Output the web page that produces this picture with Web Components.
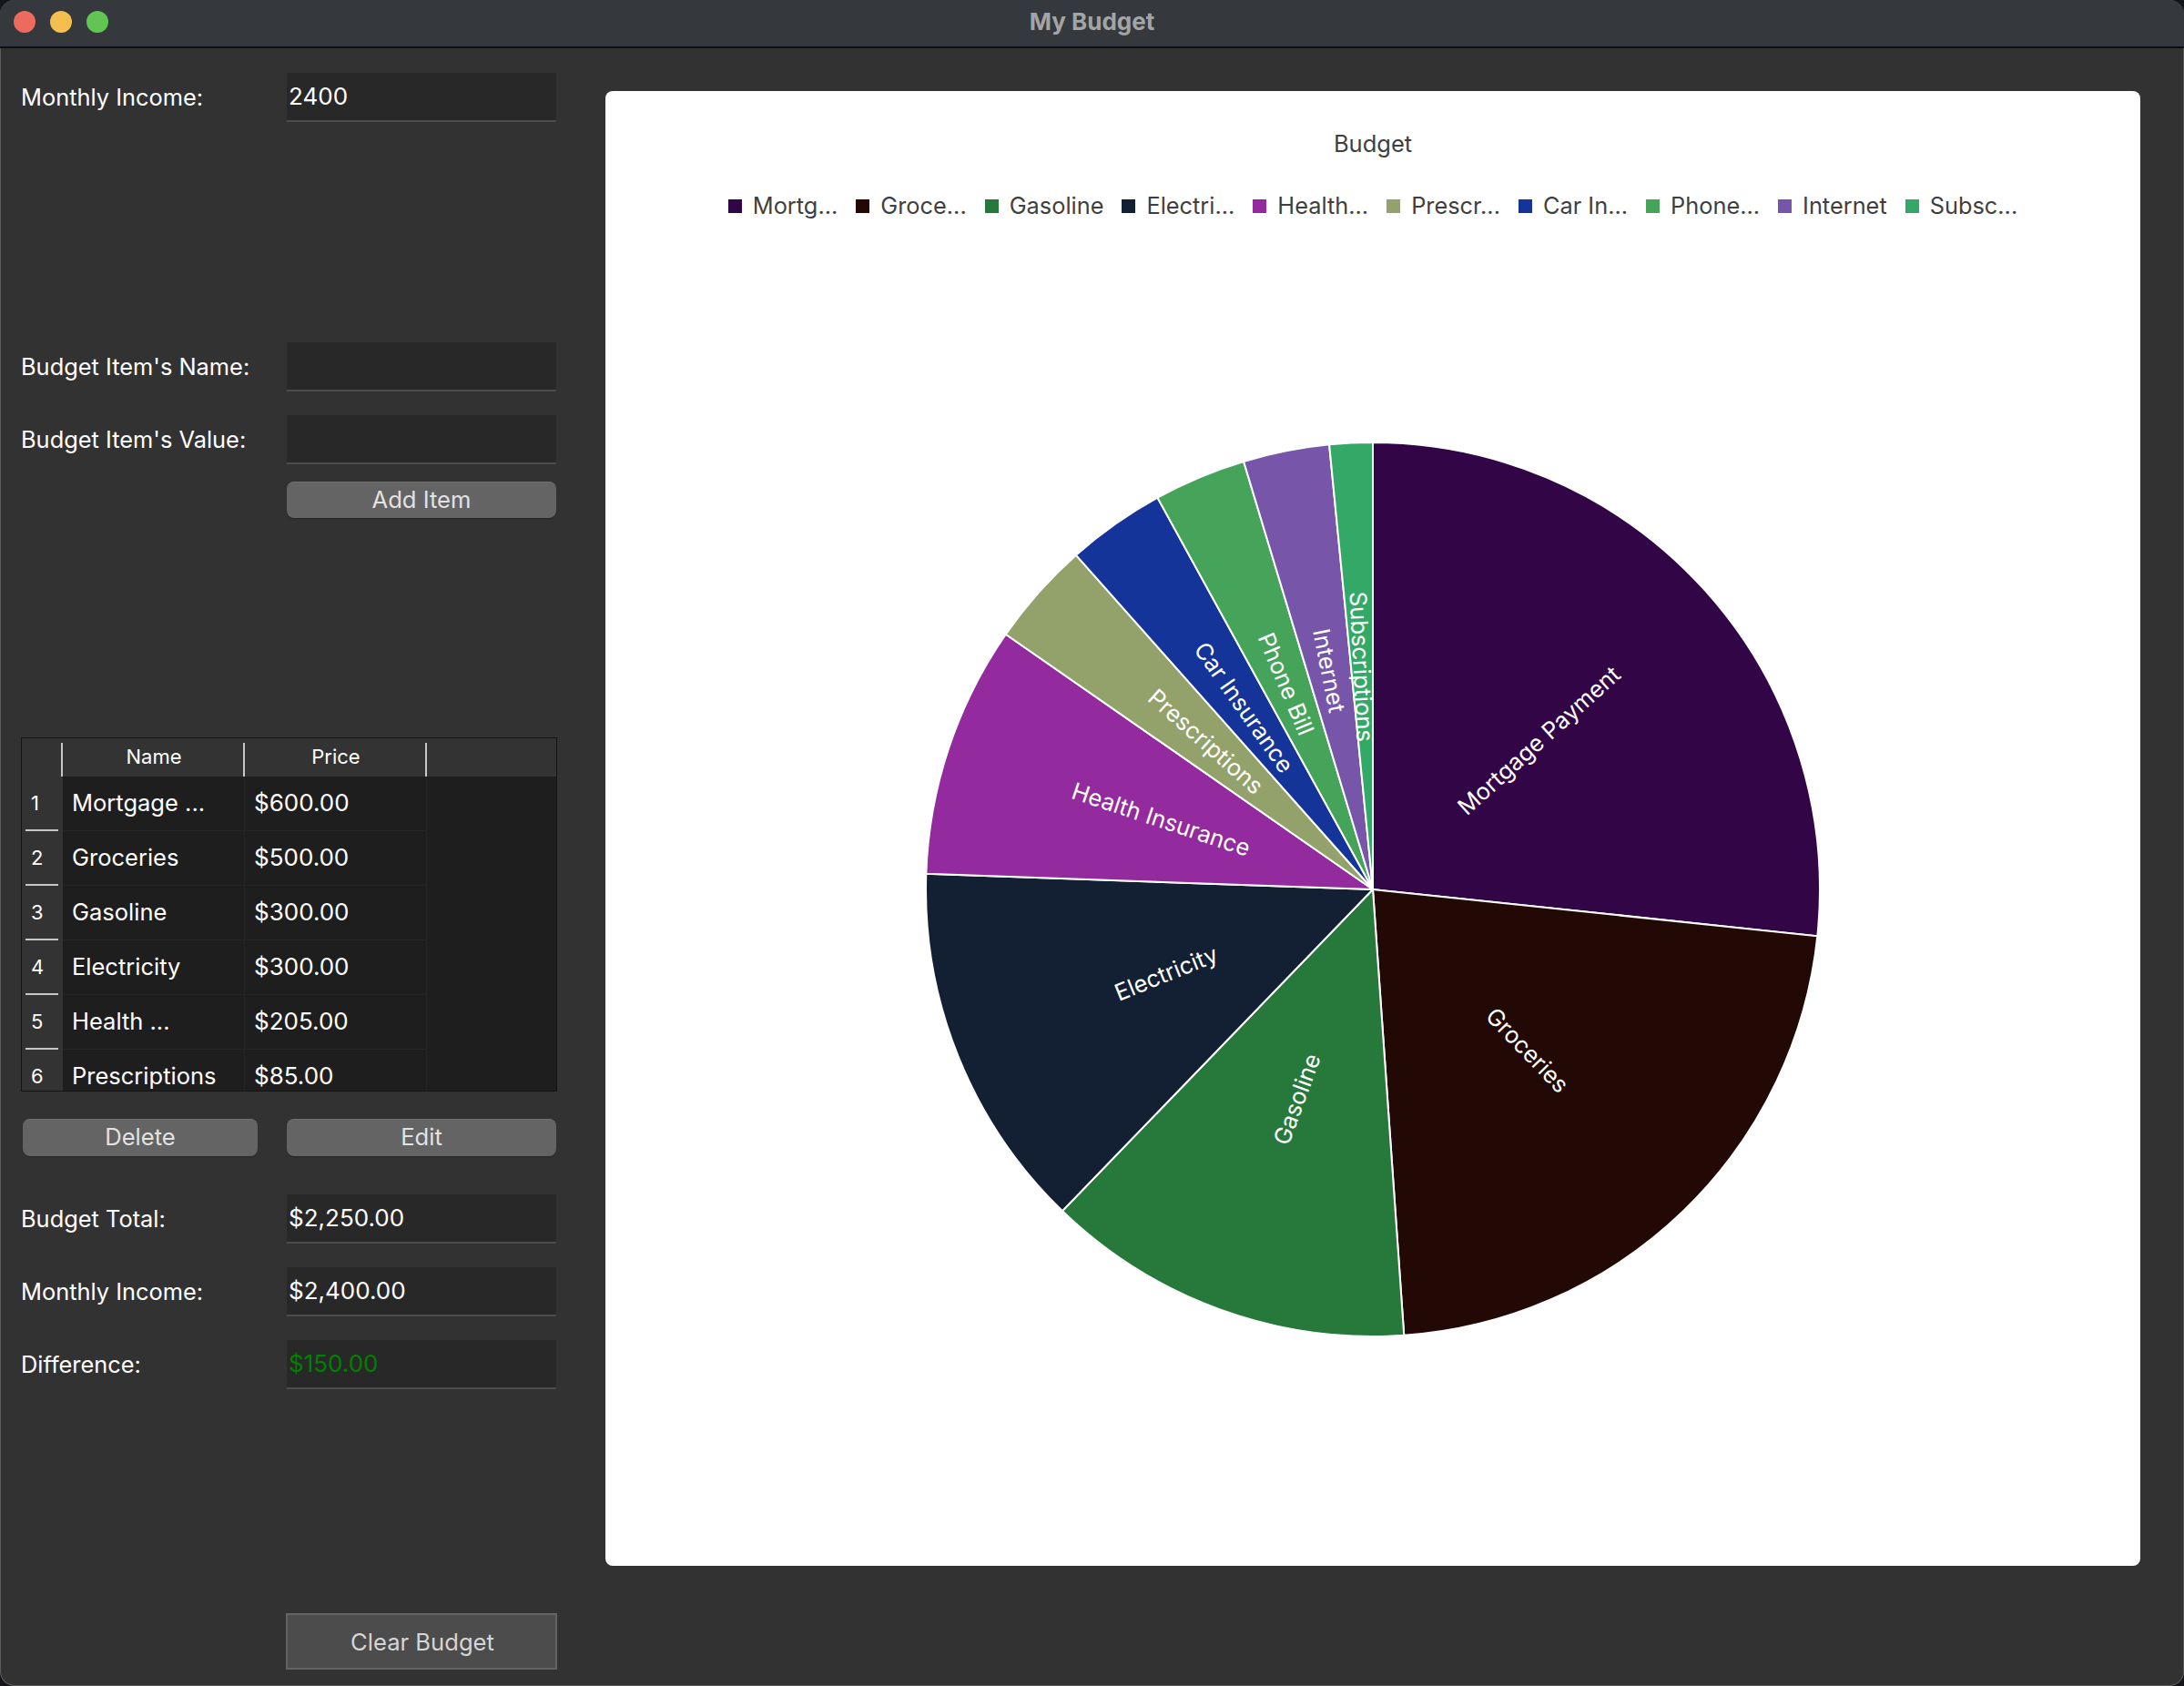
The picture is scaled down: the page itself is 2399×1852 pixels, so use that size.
<!DOCTYPE html>
<html>
<head>
<meta charset="utf-8">
<title>My Budget</title>
<style>
    html, body { margin: 0; padding: 0; background: #15151c; }
    body { width: 2399px; height: 1852px; overflow: hidden; font-family: Inter, "Liberation Sans", sans-serif; }
    .left { display: flex; flex-direction: column; width: 589px; padding-left: 23px; flex: none; }
    .buttons { display: flex; justify-content: space-between; padding-right: 1px; }
</style>
</head>
<body>
<budget-window heading="My Budget">
    <div class="left" slot="left">
        <form-row label="Monthly Income:" value="2400" style="margin-top:26px"></form-row>
        <form-row label="Budget Item's Name:" style="margin-top:241px"></form-row>
        <form-row label="Budget Item's Value:" style="margin-top:25px"></form-row>
        <div class="buttons" style="margin-top:19px;justify-content:flex-end">
            <mac-button style="width:296px">Add Item</mac-button>
        </div>
        <budget-table style="margin-top:241px"></budget-table>
        <div class="buttons" style="margin-top:30px;padding-left:2px">
            <mac-button style="width:258px;height:41px">Delete</mac-button>
            <mac-button style="width:296px;height:41px">Edit</mac-button>
        </div>
        <form-row label="Budget Total:" value="$2,250.00" style="margin-top:41px"></form-row>
        <form-row label="Monthly Income:" value="$2,400.00" style="margin-top:25px"></form-row>
        <form-row label="Difference:" value="$150.00" color="#008000" style="margin-top:25px"></form-row>
        <div class="buttons" style="margin-top:246px;justify-content:flex-end;padding-right:0">
            <mac-button flat style="width:298px;height:62px">Clear Budget</mac-button>
        </div>
    </div>
    <pie-chart slot="right" heading="Budget"></pie-chart>
</budget-window>

<script>
class BudgetWindow extends HTMLElement {
    constructor() {
        super();
        this.attachShadow({ mode: 'open' });
        this.shadowRoot.innerHTML = `
            <style>
                :host {
                    display: flex;
                    flex-direction: column;
                    width: 2399px;
                    height: 1852px;
                    box-sizing: border-box;
                    background: #323232;
                    border-radius: 16px;
                    overflow: hidden;
                    box-shadow: inset 0 0 0 1px #5a5a5a;
                }
                .bar {
                    flex: none;
                    height: 53px;
                    background: #35393d;
                    border-bottom: 2px solid #0e0e0e;
                    box-sizing: border-box;
                    display: flex;
                    align-items: center;
                    justify-content: center;
                    position: relative;
                    color: #a2a4a6;
                    font: 700 26px Inter, "Liberation Sans", sans-serif;
                    padding-bottom: 4px;
                }
                .lights { position: absolute; left: 15px; top: 12px; display: flex; gap: 16px; }
                .lights i { display: block; width: 24px; height: 24px; border-radius: 50%; }
                .main { flex: 1; display: flex; min-height: 0; }
                ::slotted(pie-chart) { margin: 47px 0 0 53px; }
            </style>
            <div class="bar">
                <div class="lights">
                    <i style="background:#ed6a5e"></i>
                    <i style="background:#f5bf4f"></i>
                    <i style="background:#61c554"></i>
                </div>
                <span class="name"></span>
            </div>
            <div class="main">
                <slot name="left"></slot>
                <slot name="right"></slot>
            </div>
        `;
    }

    connectedCallback() {
        this.shadowRoot.querySelector('.name').textContent = this.getAttribute('heading') || '';
    }
}

class FormRow extends HTMLElement {
    constructor() {
        super();
        this.attachShadow({ mode: 'open' });
        this.shadowRoot.innerHTML = `
            <style>
                :host {
                    display: grid;
                    grid-template-columns: 292px 296px;
                    height: 55px;
                    align-items: center;
                    color: #fff;
                    font: 26px Inter, "Liberation Sans", sans-serif;
                }
                .label { font-size: 25.4px; }
                .field {
                    height: 55px;
                    box-sizing: border-box;
                    background: #282828;
                    border-top: 1px solid #333;
                    border-bottom: 2px solid #4c4c4c;
                    padding: 0 2px;
                    line-height: 52px;
                    white-space: nowrap;
                }
            </style>
            <div class="label"></div>
            <div class="field"></div>
        `;
    }

    connectedCallback() {
        this.shadowRoot.querySelector('.label').textContent = this.getAttribute('label');
        const field = this.shadowRoot.querySelector('.field');
        field.textContent = this.getAttribute('value') || '';
        if (this.getAttribute('color')) field.style.color = this.getAttribute('color');
    }
}

class MacButton extends HTMLElement {
    constructor() {
        super();
        this.attachShadow({ mode: 'open' });
        this.shadowRoot.innerHTML = `
            <style>
                :host {
                    display: flex;
                    align-items: center;
                    justify-content: center;
                    height: 40px;
                    box-sizing: border-box;
                    border-radius: 8px;
                    background: #646464;
                    border-top: 1px solid #727272;
                    box-shadow: 0 1px 1px #262626;
                    color: #e2e2e2;
                    font: 25.6px Inter, "Liberation Sans", sans-serif;
                    padding-bottom: 3px;
                }
                :host([flat]) {
                    border-radius: 0;
                    background: #4c4c4c;
                    border: 2px solid #636363;
                    box-shadow: none;
                    color: #d6d6d6;
                    padding-bottom: 0;
                    padding-left: 2px;
                }
            </style>
            <slot></slot>
        `;
    }
}

class BudgetTable extends HTMLElement {
    constructor() {
        super();
        this.attachShadow({ mode: 'open' });
        this.shadowRoot.innerHTML = `
            <style>
                :host {
                    display: block;
                    width: 589px;
                    height: 389px;
                    box-sizing: border-box;
                    overflow: hidden;
                    background: #1e1e1e;
                    border: 1px solid #141414;
                    color: #fff;
                    font: 25.5px Inter, "Liberation Sans", sans-serif;
                }
                .row { display: grid; grid-template-columns: 45px 200px 200px 1fr; height: 60px; }
                .head { height: 42px; background: #333; font-size: 22px; }
                .head div {
                    display: flex;
                    align-items: center;
                    justify-content: center;
                    position: relative;
                    padding-bottom: 2px;
                }
                .head div::after {
                    content: "";
                    position: absolute;
                    right: 0;
                    top: 5px;
                    bottom: 0;
                    width: 2px;
                    background: #c8c8c8;
                }
                .head div:last-child::after { display: none; }
                .num {
                    background: #333;
                    font-size: 22px;
                    padding-left: 10px;
                    line-height: 58px;
                    position: relative;
                }
                .num::after {
                    content: "";
                    position: absolute;
                    left: 4px;
                    width: 36px;
                    bottom: 0;
                    height: 2px;
                    background: #c8c8c8;
                }
                .cell {
                    line-height: 57px;
                    padding-left: 10px;
                    white-space: nowrap;
                    border-right: 1px solid #252525;
                    border-bottom: 1px solid #252525;
                }
                .cell.price { font-size: 26px; }
                .cell.blank { border: none; }
            </style>
            <div class="row head"><div></div><div>Name</div><div>Price</div><div></div></div>
        `;
        const rows = [
            ['Mortgage ...', '$600.00'],
            ['Groceries', '$500.00'],
            ['Gasoline', '$300.00'],
            ['Electricity', '$300.00'],
            ['Health ...', '$205.00'],
            ['Prescriptions', '$85.00']
        ];
        rows.forEach((r, i) => {
            const row = document.createElement('div');
            row.className = 'row';
            row.innerHTML = `<div class="num">${i + 1}</div><div class="cell">${r[0]}</div><div class="cell price">${r[1]}</div><div class="cell blank"></div>`;
            this.shadowRoot.appendChild(row);
        });
    }
}

class PieChart extends HTMLElement {
    constructor() {
        super();
        this.attachShadow({ mode: 'open' });
        this.shadowRoot.innerHTML = `
            <style>
                :host {
                    display: flex;
                    flex-direction: column;
                    width: 1686px;
                    height: 1620px;
                    background: #fff;
                    border-radius: 8px;
                    color: #3f3f3f;
                    font: 25.5px Inter, "Liberation Sans", sans-serif;
                }
                .title { text-align: center; margin-top: 43px; line-height: 30px; }
                .legend {
                    display: flex;
                    justify-content: center;
                    gap: 20px;
                    margin-top: 38px;
                    line-height: 30px;
                    font-size: 25.35px;
                }
                .legend span { display: flex; align-items: center; gap: 12px; white-space: nowrap; }
                .legend i { display: block; width: 15px; height: 15px; }
                svg { display: block; margin: 244px auto 0; overflow: visible; }
                text { fill: #fff; font: 25.5px Inter, "Liberation Sans", sans-serif; text-anchor: middle; dominant-baseline: central; }
            </style>
            <div class="title"></div>
            <div class="legend"></div>
            <svg width="984" height="984" viewBox="-492 -492 984 984"></svg>
        `;
        // name, legend text, value, colour
        this.slices = [
            ['Mortgage Payment', 'Mortg...', 600, '#320546'],
            ['Groceries', 'Groce...', 500, '#230905'],
            ['Gasoline', 'Gasoline', 300, '#27793b'],
            ['Electricity', 'Electri...', 300, '#132033'],
            ['Health Insurance', 'Health...', 205, '#932a9e'],
            ['Prescriptions', 'Prescr...', 85, '#93a26a'],
            ['Car Insurance', 'Car In...', 80, '#15349a'],
            ['Phone Bill', 'Phone...', 75, '#45a35a'],
            ['Internet', 'Internet', 70, '#7755a8'],
            ['Subscriptions', 'Subsc...', 35, '#34a967']
        ];
    }

    connectedCallback() {
        this.shadowRoot.querySelector('.title').textContent = this.getAttribute('heading') || '';
        const legend = this.shadowRoot.querySelector('.legend');
        const svg = this.shadowRoot.querySelector('svg');
        const total = this.slices.reduce((sum, s) => sum + s[2], 0);
        const R = 491;
        const point = (deg, r) => {
            const a = deg * Math.PI / 180;
            return [(r * Math.sin(a)).toFixed(2), (-r * Math.cos(a)).toFixed(2)];
        };
        let paths = '';
        let labels = '';
        let start = 0;
        this.slices.forEach(s => {
            const sweep = s[2] / total * 360;
            const end = start + sweep;
            const mid = start + sweep / 2;
            const p1 = point(start, R);
            const p2 = point(end, R);
            paths += `<path d="M0 0L${p1[0]} ${p1[1]}A${R} ${R} 0 0 1 ${p2[0]} ${p2[1]}Z" fill="${s[3]}" stroke="#fff" stroke-width="2"/>`;
            const c = point(mid, 245);
            const rot = mid < 180 ? mid - 90 : mid - 270;
            labels += `<text transform="translate(${c[0]} ${c[1]}) rotate(${rot.toFixed(2)})">${s[0]}</text>`;
            legend.insertAdjacentHTML('beforeend', `<span><i style="background:${s[3]}"></i>${s[1]}</span>`);
            start = end;
        });
        svg.innerHTML = paths + labels;
    }
}

customElements.define('budget-window', BudgetWindow);
customElements.define('form-row', FormRow);
customElements.define('mac-button', MacButton);
customElements.define('budget-table', BudgetTable);
customElements.define('pie-chart', PieChart);
</script>
</body>
</html>
